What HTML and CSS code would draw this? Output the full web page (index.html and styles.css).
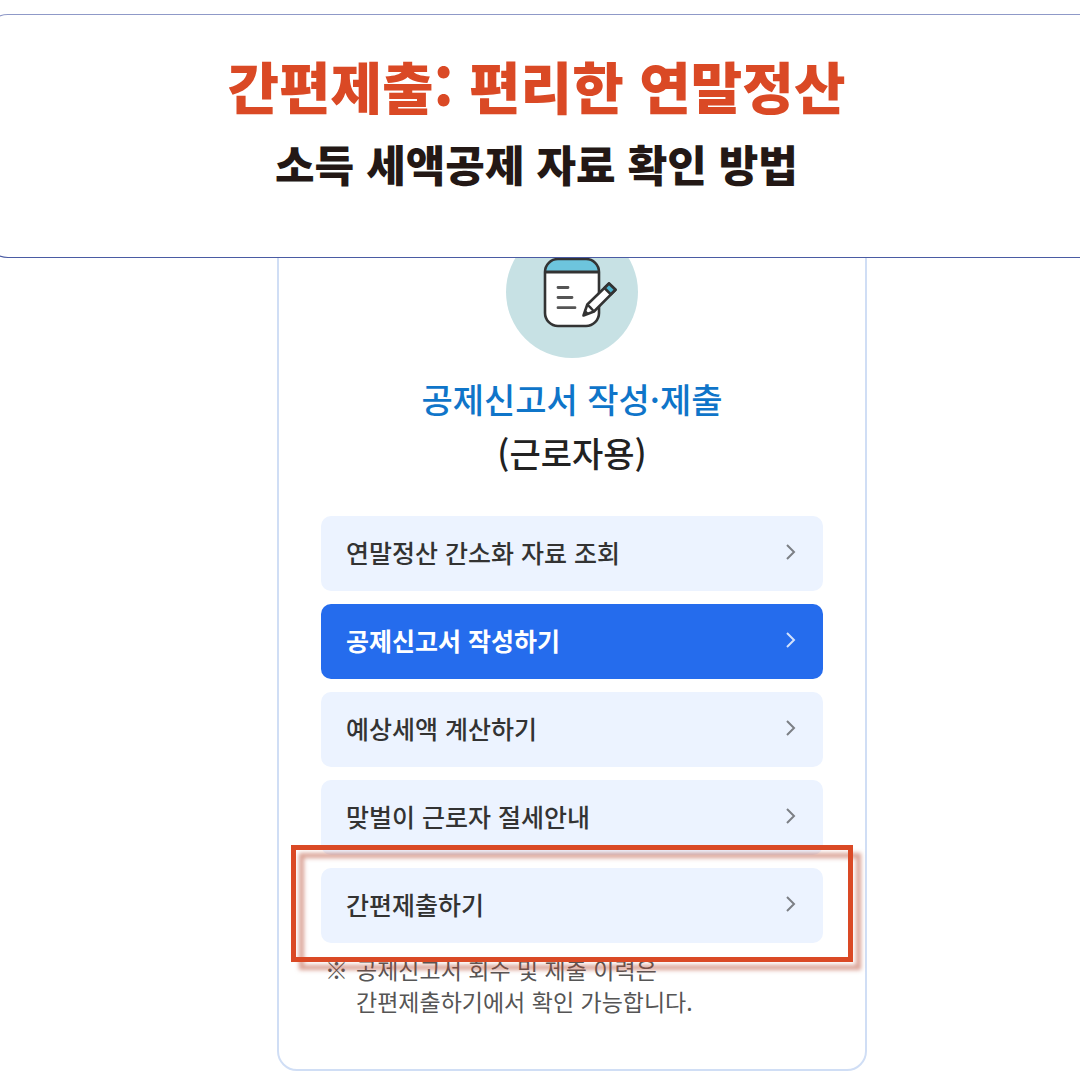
FILE: index.html
```html
<!DOCTYPE html>
<html lang="ko">
<head>
<meta charset="UTF-8" />
<meta name="viewport" content="width=device-width, initial-scale=1" />
<title>간편제출: 편리한 연말정산</title>
<link rel="stylesheet" href="styles.css">
</head>
<body>

<header class="banner">
  <h1>간편제출: 편리한 연말정산</h1>
  <p>소득 세액공제 자료 확인 방법</p>
</header>

<main>
  <section class="card" aria-labelledby="cardTitle">
    <svg class="card-icon" viewBox="0 0 132 132" aria-hidden="true">
      <circle cx="66" cy="66" r="66" fill="#c7e1e4" />
      <!-- notepad -->
      <rect x="39" y="33" width="54" height="67" rx="13" fill="#fff" />
      <path d="M39 46a13 13 0 0 1 13-13h28a13 13 0 0 1 13 13z" fill="#6dc5dd" />
      <path d="M39 46h54" stroke="#333" stroke-width="3" />
      <rect x="39" y="33" width="54" height="67" rx="13" fill="none" stroke="#333" stroke-width="2.6" />
      <path d="M52 61.5h10M52 71.5h14M52 81.7h17" stroke="#555" stroke-width="2.8" stroke-linecap="round" />
      <!-- pencil -->
      <path d="M77.5 89.5l3.8-11L103 57.5l6.5 6.3L88 85.5z" fill="#fff" stroke="#333" stroke-width="2.6" stroke-linejoin="round" />
      <path d="M98.5 62l4.5-4.5 6.5 6.3-4.7 4.5z" fill="#4ab3cf" stroke="#333" stroke-width="2.6" stroke-linejoin="round" />
      <path d="M81.3 78.5l3.2 3.2 3.5 3.8" fill="none" stroke="#333" stroke-width="2.4" />
      <path d="M77 90l2-6.5 4.3 4.3z" fill="#333" />
    </svg>

    <h2 class="card-title" id="cardTitle"><span>공제신고서 작성·제출</span> (근로자용)</h2>

    <ul class="menu">
      <li>
        <a href="#">연말정산 간소화 자료 조회
          <svg class="arrow" viewBox="0 0 10 16" aria-hidden="true"><path d="M1 1l7 7-7 7" /></svg>
        </a>
      </li>
      <li>
        <a href="#" class="active">공제신고서 작성하기
          <svg class="arrow" viewBox="0 0 10 16" aria-hidden="true"><path d="M1 1l7 7-7 7" /></svg>
        </a>
      </li>
      <li>
        <a href="#">예상세액 계산하기
          <svg class="arrow" viewBox="0 0 10 16" aria-hidden="true"><path d="M1 1l7 7-7 7" /></svg>
        </a>
      </li>
      <li>
        <a href="#">맞벌이 근로자 절세안내
          <svg class="arrow" viewBox="0 0 10 16" aria-hidden="true"><path d="M1 1l7 7-7 7" /></svg>
        </a>
      </li>
      <li class="marked">
        <a href="#">간편제출하기
          <svg class="arrow" viewBox="0 0 10 16" aria-hidden="true"><path d="M1 1l7 7-7 7" /></svg>
        </a>
      </li>
    </ul>

    <div class="note">
      <span>※</span>
      <p>공제신고서 회수 및 제출 이력은<br>간편제출하기에서 확인 가능합니다.</p>
    </div>
  </section>
</main>

</body>
</html>
```

FILE: styles.css
```css
* { box-sizing: border-box; }
body { margin: 0; padding-top: 14px; background: #fff; color: #222; font-family: "Noto Sans CJK KR", sans-serif; overflow-x: hidden; }

/* Banner, runs off both sides of the page */
.banner { position: relative; z-index: 1; margin-left: -16px; padding: 30px 0 62px 8px; background: #fff; border: 1px solid #4a5ba3; border-top-color: #8f99c8; border-right: none; border-radius: 24px 0 0 24px; text-align: center; }
.banner h1 { margin: 0 0 6px; font-size: 56px; line-height: 80px; font-weight: 900; color: #da4925; }
.banner p { margin: 0; font-size: 43px; line-height: 64px; font-weight: 900; color: #231815; }

main { padding: 0 0 9px 64px; }
.card { max-width: 590px; margin: -64px auto 0; padding: 30px 42px 52px; border: 2px solid #d0def5; border-radius: 20px; }
.card-icon { display: block; width: 132px; height: 132px; margin: 0 auto; }
.card-title { margin: 14px 0 36px; font-size: 34px; line-height: 54px; font-weight: 500; text-align: center; }
.card-title span { display: block; color: #0f75c9; }

.menu { display: flex; flex-direction: column; gap: 13px; margin: 0; padding: 0; list-style: none; }
.menu li { position: relative; }
.menu a { display: flex; align-items: center; justify-content: space-between; min-height: 75px; padding: 0 27px 4px 25px; border-radius: 10px; background: #ecf3ff; color: #333; font-size: 25px; line-height: 36px; font-weight: 500; text-decoration: none; }
.menu a:hover { background: #e0ebff; }
.menu a.active { background: #256ced; color: #fff; font-weight: 700; }
.arrow { width: 10px; height: 16px; fill: none; stroke: #7c7f85; stroke-width: 2; }
.active .arrow { stroke: #d3e1fb; }

/* Red frame around the menu item to press */
.marked::after { content: ""; position: absolute; inset: -23px -30px -19px; border: 5px solid #da4925; filter: drop-shadow(8px 8px 2px rgba(180, 65, 40, 0.5)); pointer-events: none; }

.note { display: flex; gap: 8px; margin-top: 10px; padding-left: 4px; color: #555; font-size: 23px; line-height: 32px; }
.note p { margin: 0; }
```
